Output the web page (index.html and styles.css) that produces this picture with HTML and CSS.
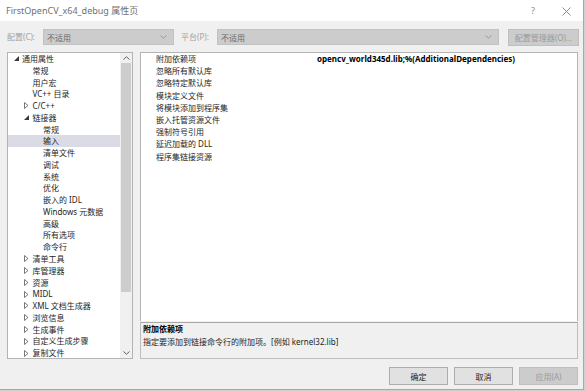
FILE: index.html
```html
<!DOCTYPE html>
<html lang="zh-CN">
<head>
<meta charset="utf-8">
<title>FirstOpenCV_x64_debug 属性页</title>
<link rel="stylesheet" href="styles.css">
</head>
<body>
<div class="window">
  <div class="titlebar">
    <span class="title">FirstOpenCV_x64_debug 属性页</span>
    <span class="tb-help">?</span>
    <span class="tb-close"><svg width="9" height="9" viewBox="0 0 9 9"><path d="M0.5 0.5 L8.5 8.5 M8.5 0.5 L0.5 8.5" stroke="#8a8a8a" stroke-width="1" fill="none"/></svg></span>
  </div>

  <div class="config-row">
    <span class="lbl">配置(C):</span>
    <div class="combo combo-cfg"><span>不适用</span><svg class="chev" width="7" height="4" viewBox="0 0 7 4"><path d="M0.5 0.5 L3.5 3.2 L6.5 0.5" stroke="#9a9a9a" fill="none"/></svg></div>
    <span class="lbl lbl-plat">平台(P):</span>
    <div class="combo combo-plat"><span>不适用</span><svg class="chev" width="7" height="4" viewBox="0 0 7 4"><path d="M0.5 0.5 L3.5 3.2 L6.5 0.5" stroke="#9a9a9a" fill="none"/></svg></div>
    <div class="btn btn-disabled btn-cfgmgr">配置管理器(O)...</div>
  </div>

  <div class="main">
    <div class="tree">
      <ul class="tree-list">
        <li class="node lv0"><span class="tw"><svg width="5" height="5" viewBox="0 0 5 5"><path d="M5 0 V5 H0 Z" fill="#3a3a3a"/></svg></span><span class="tx">通用属性</span></li>
        <li class="node lv1"><span class="tw"></span><span class="tx">常规</span></li>
        <li class="node lv1"><span class="tw"></span><span class="tx">用户宏</span></li>
        <li class="node lv1"><span class="tw"></span><span class="tx">VC++ 目录</span></li>
        <li class="node lv1"><span class="tw"><svg width="5" height="7" viewBox="0 0 5 7"><path d="M0.5 0.5 L4 3.5 L0.5 6.5 Z" fill="none" stroke="#6a6a6a" stroke-width="0.9"/></svg></span><span class="tx">C/C++</span></li>
        <li class="node lv1"><span class="tw"><svg width="5" height="5" viewBox="0 0 5 5"><path d="M5 0 V5 H0 Z" fill="#3a3a3a"/></svg></span><span class="tx">链接器</span></li>
        <li class="node lv2"><span class="tw"></span><span class="tx">常规</span></li>
        <li class="node lv2 selected"><span class="tw"></span><span class="tx">输入</span></li>
        <li class="node lv2"><span class="tw"></span><span class="tx">清单文件</span></li>
        <li class="node lv2"><span class="tw"></span><span class="tx">调试</span></li>
        <li class="node lv2"><span class="tw"></span><span class="tx">系统</span></li>
        <li class="node lv2"><span class="tw"></span><span class="tx">优化</span></li>
        <li class="node lv2"><span class="tw"></span><span class="tx">嵌入的 IDL</span></li>
        <li class="node lv2"><span class="tw"></span><span class="tx">Windows 元数据</span></li>
        <li class="node lv2"><span class="tw"></span><span class="tx">高级</span></li>
        <li class="node lv2"><span class="tw"></span><span class="tx">所有选项</span></li>
        <li class="node lv2"><span class="tw"></span><span class="tx">命令行</span></li>
        <li class="node lv1"><span class="tw"><svg width="5" height="7" viewBox="0 0 5 7"><path d="M0.5 0.5 L4 3.5 L0.5 6.5 Z" fill="none" stroke="#6a6a6a" stroke-width="0.9"/></svg></span><span class="tx">清单工具</span></li>
        <li class="node lv1"><span class="tw"><svg width="5" height="7" viewBox="0 0 5 7"><path d="M0.5 0.5 L4 3.5 L0.5 6.5 Z" fill="none" stroke="#6a6a6a" stroke-width="0.9"/></svg></span><span class="tx">库管理器</span></li>
        <li class="node lv1"><span class="tw"><svg width="5" height="7" viewBox="0 0 5 7"><path d="M0.5 0.5 L4 3.5 L0.5 6.5 Z" fill="none" stroke="#6a6a6a" stroke-width="0.9"/></svg></span><span class="tx">资源</span></li>
        <li class="node lv1"><span class="tw"><svg width="5" height="7" viewBox="0 0 5 7"><path d="M0.5 0.5 L4 3.5 L0.5 6.5 Z" fill="none" stroke="#6a6a6a" stroke-width="0.9"/></svg></span><span class="tx">MIDL</span></li>
        <li class="node lv1"><span class="tw"><svg width="5" height="7" viewBox="0 0 5 7"><path d="M0.5 0.5 L4 3.5 L0.5 6.5 Z" fill="none" stroke="#6a6a6a" stroke-width="0.9"/></svg></span><span class="tx">XML 文档生成器</span></li>
        <li class="node lv1"><span class="tw"><svg width="5" height="7" viewBox="0 0 5 7"><path d="M0.5 0.5 L4 3.5 L0.5 6.5 Z" fill="none" stroke="#6a6a6a" stroke-width="0.9"/></svg></span><span class="tx">浏览信息</span></li>
        <li class="node lv1"><span class="tw"><svg width="5" height="7" viewBox="0 0 5 7"><path d="M0.5 0.5 L4 3.5 L0.5 6.5 Z" fill="none" stroke="#6a6a6a" stroke-width="0.9"/></svg></span><span class="tx">生成事件</span></li>
        <li class="node lv1"><span class="tw"><svg width="5" height="7" viewBox="0 0 5 7"><path d="M0.5 0.5 L4 3.5 L0.5 6.5 Z" fill="none" stroke="#6a6a6a" stroke-width="0.9"/></svg></span><span class="tx">自定义生成步骤</span></li>
        <li class="node lv1"><span class="tw"><svg width="5" height="7" viewBox="0 0 5 7"><path d="M0.5 0.5 L4 3.5 L0.5 6.5 Z" fill="none" stroke="#6a6a6a" stroke-width="0.9"/></svg></span><span class="tx">复制文件</span></li>
      </ul>
      <div class="vscroll">
        <div class="sb-btn"><svg width="7" height="4" viewBox="0 0 7 4"><path d="M0.5 3.5 L3.5 0.8 L6.5 3.5" stroke="#606060" fill="none"/></svg></div>
        <div class="sb-thumb"></div>
        <div class="sb-track"></div>
        <div class="sb-btn"><svg width="7" height="4" viewBox="0 0 7 4"><path d="M0.5 0.5 L3.5 3.2 L6.5 0.5" stroke="#606060" fill="none"/></svg></div>
      </div>
    </div>

    <div class="right">
      <div class="grid">
        <div class="prow first"><span class="pname">附加依赖项</span><span class="pval">opencv_world345d.lib;%(AdditionalDependencies)</span></div>
        <div class="prow"><span class="pname">忽略所有默认库</span><span class="pval"></span></div>
        <div class="prow"><span class="pname">忽略特定默认库</span><span class="pval"></span></div>
        <div class="prow"><span class="pname">模块定义文件</span><span class="pval"></span></div>
        <div class="prow"><span class="pname">将模块添加到程序集</span><span class="pval"></span></div>
        <div class="prow"><span class="pname">嵌入托管资源文件</span><span class="pval"></span></div>
        <div class="prow"><span class="pname">强制符号引用</span><span class="pval"></span></div>
        <div class="prow"><span class="pname">延迟加载的 DLL</span><span class="pval"></span></div>
        <div class="prow"><span class="pname">程序集链接资源</span><span class="pval"></span></div>
      </div>
      <div class="desc">
        <div class="desc-title">附加依赖项</div>
        <div class="desc-text">指定要添加到链接命令行的附加项。[例如 kernel32.lib]</div>
      </div>
    </div>
  </div>

  <div class="buttons">
    <div class="btn">确定</div>
    <div class="btn">取消</div>
    <div class="btn btn-disabled">应用(A)</div>
  </div>
</div>
</body>
</html>
```

FILE: styles.css
```css
html, body {
  margin: 0;
  padding: 0;
  background: #cfcfcf;
}

body {
  font-family: "Noto Sans", "Noto Sans CJK SC", sans-serif;
  font-size: 8px;
  color: #1e1e1e;
}

.window {
  width: 583px;
  height: 389px;
  background: #f0f0f0;
  border-right: 1px solid #a8a8a8;
  border-bottom: 1px solid #a8a8a8;
  display: flex;
  flex-direction: column;
  overflow: hidden;
}

/* title bar */
.titlebar {
  height: 21px;
  flex: none;
  background: #ffffff;
  display: flex;
  align-items: center;
  padding: 1px 0 0 6px;
  box-sizing: border-box;
}

.title {
  font-size: 9px;
  color: #707070;
  line-height: 12px;
}

.tb-help {
  margin-left: auto;
  font-size: 9px;
  color: #8a8a8a;
  line-height: 12px;
}

.tb-close {
  display: flex;
  margin-left: 27px;
  margin-right: 12px;
}

/* configuration row */
.config-row {
  margin-top: 8px;
  height: 16px;
  flex: none;
  display: flex;
  align-items: center;
  padding-left: 7px;
}

.lbl {
  width: 36px;
  color: #a2a2a2;
  line-height: 16px;
  flex: none;
}

.lbl-plat {
  margin-left: 7px;
}

.combo {
  height: 16px;
  box-sizing: border-box;
  background: #cccccc;
  border: 1px solid #c2c2c2;
  display: flex;
  align-items: center;
  padding: 0 6px 0 3px;
  color: #6a6a6a;
  flex: none;
}

.combo .chev {
  margin-left: auto;
}

.combo-cfg {
  width: 131px;
}

.combo-plat {
  width: 282px;
}

.btn {
  width: 59px;
  height: 18px;
  box-sizing: border-box;
  background: #e1e1e1;
  border: 1px solid #adadad;
  display: flex;
  align-items: center;
  justify-content: center;
  color: #1e1e1e;
  flex: none;
}

.btn-disabled {
  background: #cccccc;
  border-color: #bfbfbf;
  color: #9a9a9a;
}

.btn-cfgmgr {
  width: 71px;
  height: 17px;
  margin-left: 9px;
}

/* main area */
.main {
  margin-top: 7px;
  height: 307px;
  flex: none;
  display: flex;
  padding-left: 7px;
}

.tree {
  width: 126px;
  height: 307px;
  box-sizing: border-box;
  border: 1px solid #b4b4b4;
  background: #ffffff;
  display: flex;
  flex: none;
}

.tree-list {
  list-style: none;
  margin: 0;
  padding: 0;
  width: 112px;
  flex: none;
}

.node {
  height: 11.78px;
  line-height: 11.78px;
  display: flex;
  align-items: center;
  white-space: nowrap;
}

.node.selected {
  background: #dadbe4;
}

.lv0 { padding-left: 4px; }
.lv1 { padding-left: 14.5px; }
.lv2 { padding-left: 25px; }

.tw {
  width: 10px;
  flex: none;
  display: flex;
  align-items: center;
  padding-left: 1.5px;
  box-sizing: border-box;
}

.vscroll {
  width: 12px;
  flex: none;
  display: flex;
  flex-direction: column;
  padding: 0 1px;
  box-sizing: border-box;
  background: #f0f0f0;
}

.sb-btn {
  height: 10px;
  flex: none;
  display: flex;
  align-items: center;
  justify-content: center;
}

.sb-thumb {
  height: 229px;
  flex: none;
  background: #cdcdcd;
}

.sb-track {
  flex: 1;
}

.right {
  margin-left: 7px;
  width: 438px;
  display: flex;
  flex-direction: column;
  flex: none;
}

.grid {
  height: 269px;
  box-sizing: border-box;
  border: 1px solid #b4b4b4;
  border-bottom: none;
  background: #ffffff;
  flex: none;
}

.prow {
  height: 12.2px;
  line-height: 12.2px;
  display: flex;
  white-space: nowrap;
}

.pname {
  width: 176px;
  padding-left: 15px;
  box-sizing: border-box;
  flex: none;
}

.pval {
  flex: 1;
}

.prow.first .pval {
  font-weight: bold;
  color: #000000;
}

.desc {
  margin-top: 1px;
  flex: 1;
  box-sizing: border-box;
  border: 1px solid #bdbdbd;
  border-top-color: #a8a8a8;
  background: #f0f0f0;
  padding: 0 0 0 2px;
}

.desc-title {
  margin-top: -1px;
  font-weight: bold;
  line-height: 13px;
  color: #000000;
}

.desc-text {
  line-height: 13px;
}

/* bottom buttons */
.buttons {
  margin-top: 8px;
  flex: none;
  display: flex;
  justify-content: flex-end;
  gap: 6px;
  padding-right: 5px;
}
```
